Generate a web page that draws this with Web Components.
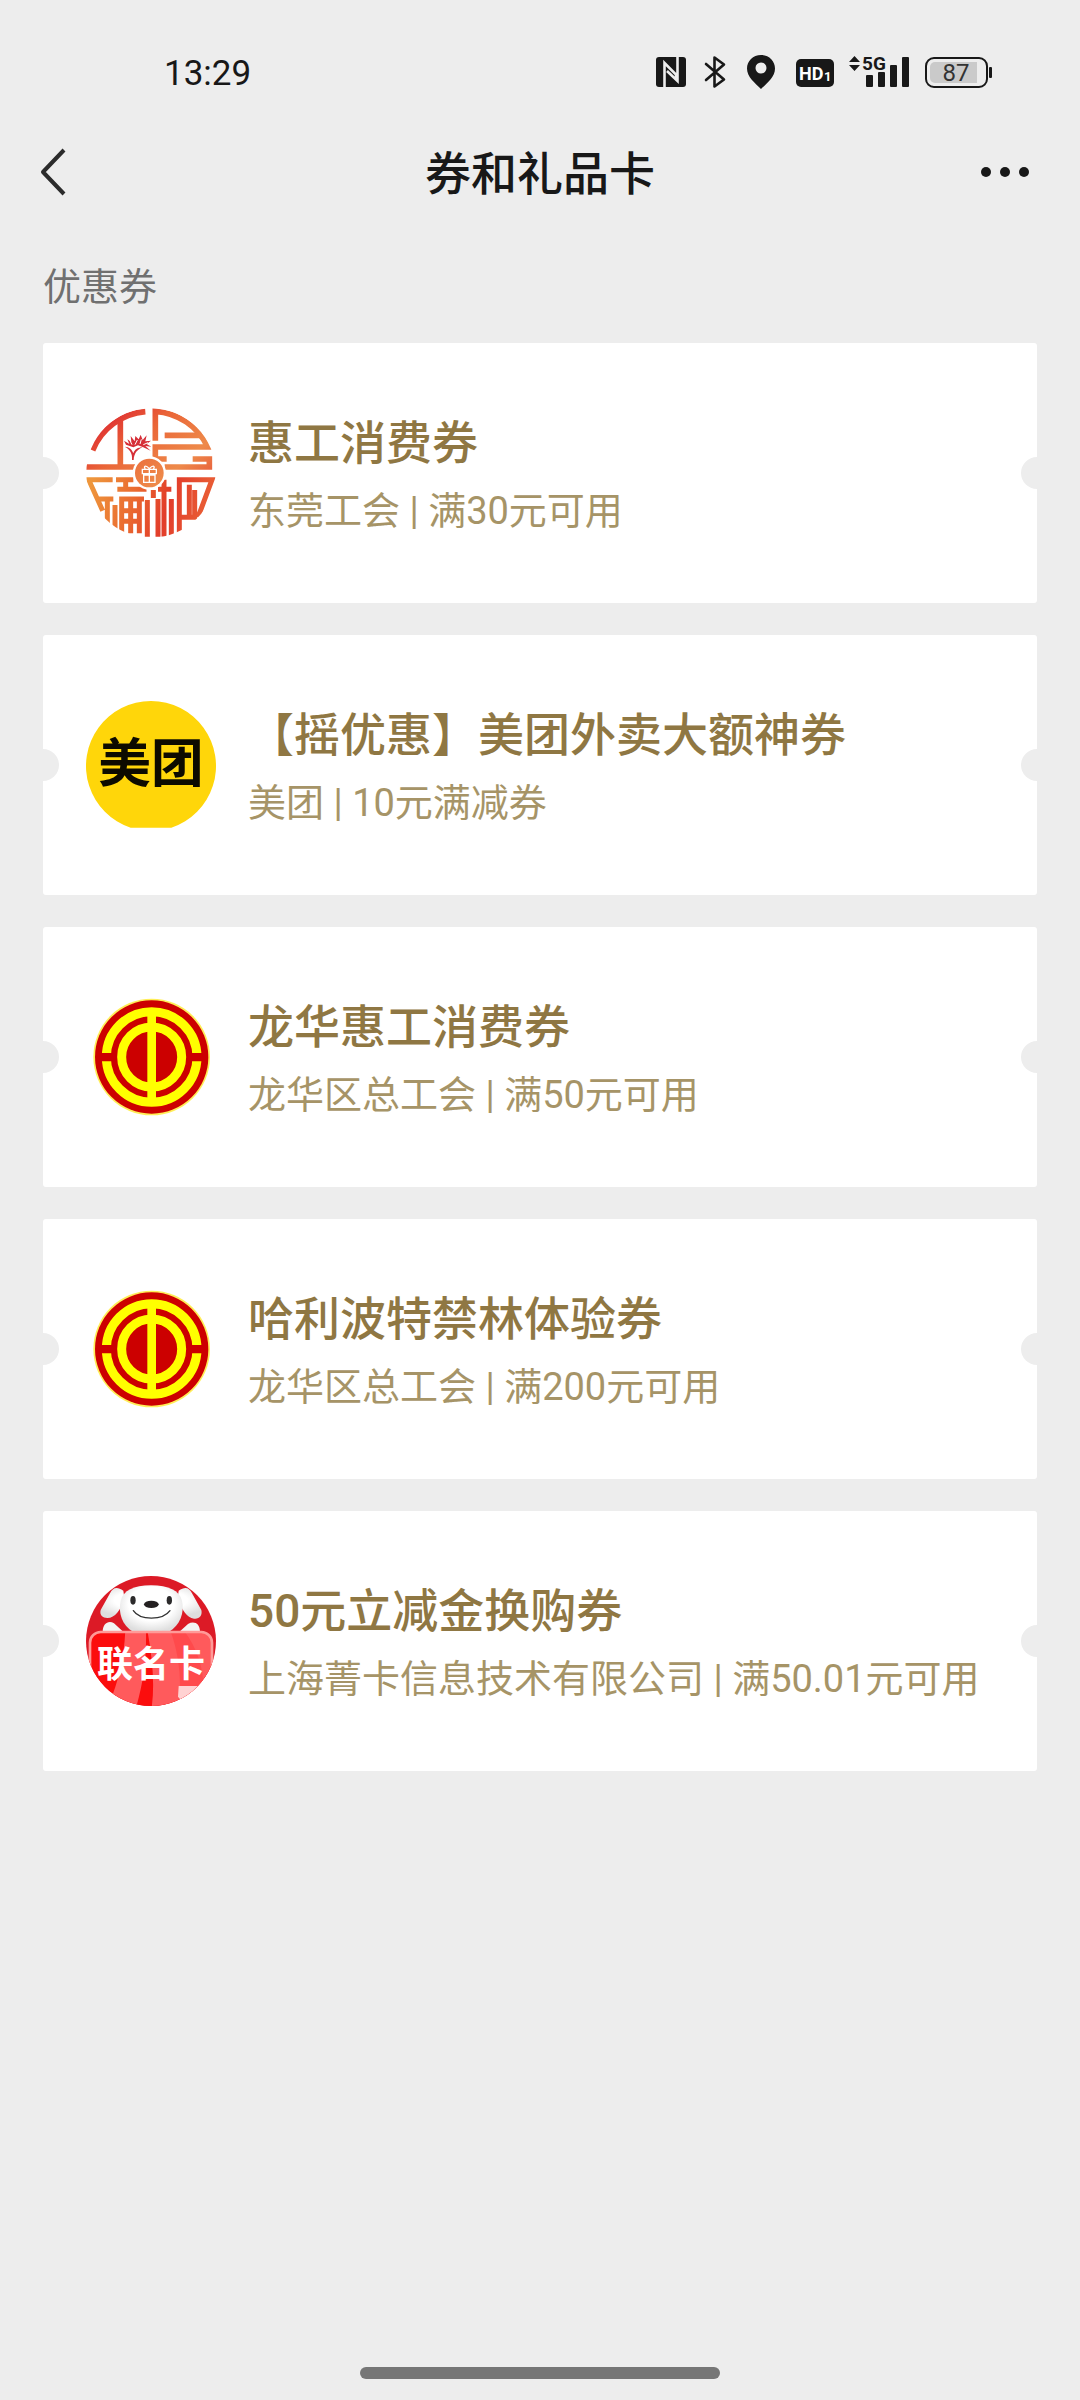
<!DOCTYPE html>
<html lang="zh-CN">
<head>
<meta charset="UTF-8">
<meta name="viewport" content="width=device-width, initial-scale=1">
<title>券和礼品卡</title>
<style>
    html, body {
        margin: 0;
        padding: 0;
    }
    body {
        --page: #ededed;
        --ink: #181818;
        --gold: #8f7743;
        --gold-soft: #a69467;
        min-height: 100vh;
        display: flex;
        flex-direction: column;
        background: var(--page);
        color: var(--ink);
        font-family: Roboto, "Noto Sans CJK SC", sans-serif;
    }
    main {
        flex: 1;
    }
</style>
</head>
<body>
<status-bar time="13:29" battery="87"></status-bar>
<nav-bar>券和礼品卡</nav-bar>
<main>
    <coupon-section>
        <span slot="heading">优惠券</span>
        <coupon-card>
            <brand-logo slot="logo" name="fuli"></brand-logo>
            惠工消费券
            <span slot="detail">东莞工会 | 满30元可用</span>
        </coupon-card>
        <coupon-card>
            <brand-logo slot="logo" name="meituan"></brand-logo>
            【摇优惠】美团外卖大额神券
            <span slot="detail">美团 | 10元满减券</span>
        </coupon-card>
        <coupon-card>
            <brand-logo slot="logo" name="union"></brand-logo>
            龙华惠工消费券
            <span slot="detail">龙华区总工会 | 满50元可用</span>
        </coupon-card>
        <coupon-card>
            <brand-logo slot="logo" name="union"></brand-logo>
            哈利波特禁林体验券
            <span slot="detail">龙华区总工会 | 满200元可用</span>
        </coupon-card>
        <coupon-card>
            <brand-logo slot="logo" name="joy"></brand-logo>
            50元立减金换购券
            <span slot="detail">上海菁卡信息技术有限公司 | 满50.01元可用</span>
        </coupon-card>
    </coupon-section>
</main>
<home-indicator></home-indicator>

<script>
class StatusBar extends HTMLElement {
    constructor() {
        super();
        this.attachShadow({ mode: 'open' });
    }

    connectedCallback() {
        const time = this.getAttribute('time') || '';
        const battery = this.getAttribute('battery') || '';

        this.shadowRoot.innerHTML = `
        <style>
            :host {
                display: flex;
                align-items: center;
                justify-content: space-between;
                height: 48px;
                padding: 48px 88px 24px 164px;
            }
            time {
                padding-top: 4px;
                font-size: 35px;
                line-height: 48px;
            }
            .icons {
                display: flex;
                align-items: center;
                gap: 14px;
            }
            svg {
                display: block;
                fill: var(--ink);
                font-family: Roboto, sans-serif;
            }
        </style>
        <time>${time}</time>
        <div class="icons">
            <!-- NFC -->
            <svg width="32" height="36" viewBox="0 0 32 36">
                <rect y="3" width="30" height="30" rx="3"/>
                <path d="M8.500 33V9L20 20.500V26M21.500 3V27L11 17" fill="none" stroke="#ededed" stroke-width="2.600"/>
            </svg>
            <!-- Bluetooth -->
            <svg width="28" height="36" viewBox="0 0 28 36">
                <path d="M4 10L22 25.500L12.500 32.500V3.500L22 10.500L4 26" fill="none" stroke="#181818" stroke-width="2.600" stroke-linejoin="round" stroke-linecap="round"/>
            </svg>
            <!-- Location -->
            <svg width="34" height="36" viewBox="0 0 34 36">
                <path fill-rule="evenodd" d="M17 1C9 1 3 7 3 14.500C3 23 11 29 17 35C23 29 31 23 31 14.500C31 7 25 1 17 1ZM17 8.500A5.500 5.500 0 1 1 17 19.500A5.500 5.500 0 1 1 17 8.500Z"/>
            </svg>
            <!-- HD -->
            <svg width="43" height="36" viewBox="0 0 43 36">
                <rect x="4" y="5" width="38" height="28" rx="5"/>
                <text x="7" y="26" font-size="18" font-weight="700" fill="#fff">HD</text>
                <text x="32" y="27" font-size="13" font-weight="700" fill="#fff">1</text>
            </svg>
            <!-- Signal -->
            <svg width="62" height="52" viewBox="0 -8 62 52">
                <path d="M0 8L5.500 2L11 8ZM0 11H11L5.500 17Z"/>
                <text x="13" y="16" font-size="19" font-weight="700">5G</text>
                <rect x="17" y="21" width="7" height="12" rx="1"/>
                <rect x="29" y="18" width="7" height="15" rx="1"/>
                <rect x="41" y="11" width="7" height="22" rx="1"/>
                <rect x="53" y="3" width="7" height="30" rx="1"/>
            </svg>
            <!-- Battery -->
            <svg width="67" height="36" viewBox="0 0 67 36">
                <rect x="1" y="4" width="61" height="29" rx="8" fill="none" stroke="#181818" stroke-width="2"/>
                <path d="M10 8H52V29H10A5 5 0 0 1 5 24V13A5 5 0 0 1 10 8Z" fill="#cacaca"/>
                <rect x="64" y="13" width="3" height="11" rx="1"/>
                <text x="31" y="27" font-size="24" text-anchor="middle" fill="#333">${battery}</text>
            </svg>
        </div>
        `;
    }
}

class NavBar extends HTMLElement {
    constructor() {
        super();
        this.attachShadow({ mode: 'open' }).innerHTML = `
        <style>
            :host {
                display: grid;
                grid-template-columns: 72px 1fr 72px;
                align-items: center;
                height: 104px;
                padding: 0 40px;
            }
            button {
                display: flex;
                align-items: center;
                height: 72px;
                padding: 0;
                border: 0;
                background: none;
                color: inherit;
            }
            button:last-child {
                justify-content: flex-end;
            }
            h1 {
                margin: 0;
                padding-top: 4px;
                font-size: 46px;
                line-height: 64px;
                font-weight: 500;
                text-align: center;
            }
        </style>
        <button type="button" aria-label="返回">
            <svg width="28" height="48" viewBox="0 0 28 48">
                <path d="M24 2L3 24L24 46" fill="none" stroke="#2b2b2b" stroke-width="4" stroke-linejoin="round"/>
            </svg>
        </button>
        <h1><slot></slot></h1>
        <button type="button" aria-label="更多">
            <svg width="60" height="12" viewBox="0 0 60 12" fill="currentColor">
                <circle cx="6" cy="6" r="5"/>
                <circle cx="25" cy="6" r="5"/>
                <circle cx="44" cy="6" r="5"/>
            </svg>
        </button>
        `;
    }
}

class CouponSection extends HTMLElement {
    constructor() {
        super();
        this.attachShadow({ mode: 'open' }).innerHTML = `
        <style>
            :host {
                display: block;
                padding: 35px 43px;
            }
            h2 {
                margin: 0 0 28px;
                font-size: 38px;
                line-height: 56px;
                font-weight: 400;
                color: #707070;
            }
            .list {
                display: flex;
                flex-direction: column;
                gap: 32px;
            }
        </style>
        <h2><slot name="heading"></slot></h2>
        <div class="list"><slot></slot></div>
        `;
    }
}

class CouponCard extends HTMLElement {
    constructor() {
        super();
        this.attachShadow({ mode: 'open' }).innerHTML = `
        <style>
            :host {
                display: block;
            }
            a {
                position: relative;
                display: flex;
                align-items: center;
                gap: 32px;
                padding: 58px 43px;
                border-radius: 3px;
                overflow: hidden;
                background: #fff;
                color: var(--gold);
                text-decoration: none;
            }
            /* ticket notches */
            a::before, a::after {
                content: "";
                position: absolute;
                top: calc(50% - 16px);
                width: 32px;
                height: 32px;
                border-radius: 50%;
                background: var(--page);
            }
            a::before {
                left: -16px;
            }
            a::after {
                right: -16px;
            }
            .text {
                flex: 1;
                min-width: 0;
                padding-top: 8px;
            }
            h3, p {
                margin: 0;
                line-height: 68px;
                white-space: nowrap;
            }
            h3 {
                font-size: 46px;
                font-weight: 500;
            }
            p {
                font-size: 38px;
                color: var(--gold-soft);
            }
        </style>
        <a href="#">
            <slot name="logo"></slot>
            <div class="text">
                <h3><slot></slot></h3>
                <p><slot name="detail"></slot></p>
            </div>
        </a>
        `;
    }
}

const LOGOS = {
    fuli: `
        <svg viewBox="48 54 390 390">
            <defs>
                <linearGradient id="warm" gradientUnits="userSpaceOnUse" x1="90" y1="60" x2="390" y2="420">
                    <stop offset="0" stop-color="#dc2030"/>
                    <stop offset=".3" stop-color="#ea6638"/>
                    <stop offset=".6" stop-color="#ee8a4a"/>
                    <stop offset="1" stop-color="#e02a2c"/>
                </linearGradient>
                <linearGradient id="low" gradientUnits="userSpaceOnUse" x1="60" y1="290" x2="390" y2="380">
                    <stop offset="0" stop-color="#ee963c"/>
                    <stop offset=".4" stop-color="#ea6a30"/>
                    <stop offset=".7" stop-color="#e23c2a"/>
                    <stop offset="1" stop-color="#e85a34"/>
                </linearGradient>
                <clipPath id="disc"><circle cx="243" cy="249" r="194"/></clipPath>
            </defs>
            <g clip-path="url(#disc)" fill="none" stroke-width="17">
                <g stroke="url(#warm)">
                    <path d="M68 181A187 187 0 0 1 226 65"/>
                    <path d="M151 88V226"/>
                    <path d="M48 231H196"/>
                    <path d="M256 152V64A187 187 0 0 1 413 171H256V207H290"/>
                    <path d="M284 136H394"/>
                    <path d="M284 231H418V207H368"/>
                </g>
                <g stroke="url(#low)" stroke-width="15">
                    <path d="M128 269H56L98 362M78 327H130M112 327V430M135 345V440"/>
                    <path d="M138 269H190M167 269V298M142 298H222V284"/>
                    <path d="M155 430V327H222M182 327V430M155 362H208M155 394H208M208 327V430"/>
                    <path d="M232 330V440"/>
                    <path d="M250 300V324M264 327V440M264 298H304M282 269V440M304 327V440"/>
                    <path d="M328 440V269H426L384 382M358 284V382H330M358 382H374V300"/>
                </g>
            </g>
            <circle cx="238" cy="249" r="50" fill="#fff"/>
            <circle cx="238" cy="249" r="43" fill="url(#warm)"/>
            <path d="M217 238H259V251H217ZM221 255H255V277H221ZM238 238V277M238 236C225 222 220 231 226 236M238 236C251 222 256 231 250 236" fill="none" stroke="#fff" stroke-width="4"/>
            <g fill="#d62f38">
                <path d="M186 210C188 190 180 178 164 170C178 170 187 180 190 190C194 178 204 172 218 172C202 178 192 190 191 210Z"/>
                <path d="M162 152L178 162L172 148L184 156L182 138L194 154L196 138L206 148L212 134L218 150L230 136L226 154L243 152L230 162L244 170L226 168L242 182L220 172L204 166L190 172L168 164Z"/>
            </g>
            <path d="M195 164L202 150M210 162L214 148M220 164L234 158M186 164L180 152" stroke="#fff" stroke-width="3"/>
        </svg>`,
    meituan: `
        <svg viewBox="48 45 390 390">
            <path d="M182 428A195 195 0 1 1 304 428Z" fill="#ffd60a"/>
            <text x="243" y="290" font-size="158" font-weight="700" text-anchor="middle" fill="#0d0b00">美团</text>
        </svg>`,
    union: `
        <svg viewBox="48 36 390 390">
            <circle cx="245" cy="231" r="175" fill="#ffee58"/>
            <circle cx="245" cy="231" r="170" fill="#c00"/>
            <circle cx="245" cy="231" r="136" fill="none" stroke="#ff0" stroke-width="27"/>
            <path d="M90 219H140V244H90ZM350 219H400V244H350Z" fill="#c00"/>
            <circle cx="245" cy="231" r="90" fill="none" stroke="#ff0" stroke-width="27"/>
            <path d="M232 90H258V372H232Z" fill="#ff0"/>
        </svg>`,
    joy: `
        <svg viewBox="48 48 390 390">
            <defs>
                <clipPath id="round"><circle cx="243" cy="243" r="195"/></clipPath>
                <clipPath id="panel"><rect x="58" y="214" width="368" height="250" rx="34"/></clipPath>
                <radialGradient id="fur" cx=".5" cy=".4" r=".6">
                    <stop offset=".6" stop-color="#fff"/>
                    <stop offset="1" stop-color="#dedede"/>
                </radialGradient>
            </defs>
            <g clip-path="url(#round)">
                <rect x="48" y="48" width="390" height="390" fill="#dc1a26"/>
                <path d="M160 92C140 78 128 84 120 100L92 150C88 166 98 174 112 174C136 174 150 150 164 120ZM326 92C346 78 358 84 366 100L394 150C398 166 388 178 372 176C350 174 338 150 322 120Z" fill="url(#fur)"/>
                <path d="M98 216C98 190 116 180 132 190L158 214ZM390 216C390 190 372 182 354 192L330 214Z" fill="#f4f4f4"/>
                <path d="M243 76C190 76 160 92 152 122C144 158 156 196 190 216H296C330 196 344 158 336 122C328 92 296 76 243 76Z" fill="url(#fur)"/>
                <ellipse cx="189" cy="121" rx="8" ry="13" fill="#2c2a2b"/>
                <ellipse cx="298" cy="121" rx="8" ry="13" fill="#2c2a2b"/>
                <ellipse cx="244" cy="133" rx="22" ry="11" fill="#242021"/>
                <path d="M190 152C210 182 278 182 300 152" fill="none" stroke="#333" stroke-width="4" stroke-linecap="round"/>
                <g clip-path="url(#panel)">
                    <rect x="48" y="210" width="390" height="240" fill="#fb0d0d"/>
                    <path d="M166 210H228C230 300 220 370 196 450H110C144 370 162 300 166 210Z" fill="#ff5a5c"/>
                    <path d="M232 210H438V300L360 450H244C256 370 246 290 232 210Z" fill="#ff5a5c"/>
                    <path d="M300 210H340C380 260 400 320 400 380H330C330 320 320 260 300 210Z" fill="#ff4a4c"/>
                    <path d="M326 378H400V440H350L324 410Z" fill="#ffd2d2"/>
                </g>
                <rect x="60" y="216" width="366" height="250" rx="32" fill="none" stroke="#ff9a98" stroke-width="8"/>
                <text x="243" y="351" font-size="108" font-weight="700" text-anchor="middle" fill="#fff">联名卡</text>
            </g>
        </svg>`
};

class BrandLogo extends HTMLElement {
    constructor() {
        super();
        this.attachShadow({ mode: 'open' });
    }

    connectedCallback() {
        this.shadowRoot.innerHTML = `
        <style>
            :host {
                display: block;
                flex: none;
                width: 130px;
                height: 130px;
            }
            svg {
                display: block;
                width: 100%;
                height: 100%;
                font-family: "Noto Sans CJK SC", sans-serif;
            }
        </style>
        ${LOGOS[this.getAttribute('name')] || ''}
        `;
    }
}

class HomeIndicator extends HTMLElement {
    constructor() {
        super();
        this.attachShadow({ mode: 'open' }).innerHTML = `
        <style>
            :host {
                display: flex;
                justify-content: center;
                padding: 21px 0;
            }
            div {
                width: 33.333%;
                height: 12px;
                border-radius: 6px;
                background: #767676;
            }
        </style>
        <div></div>
        `;
    }
}

customElements.define('status-bar', StatusBar);
customElements.define('nav-bar', NavBar);
customElements.define('coupon-section', CouponSection);
customElements.define('coupon-card', CouponCard);
customElements.define('brand-logo', BrandLogo);
customElements.define('home-indicator', HomeIndicator);
</script>
</body>
</html>
